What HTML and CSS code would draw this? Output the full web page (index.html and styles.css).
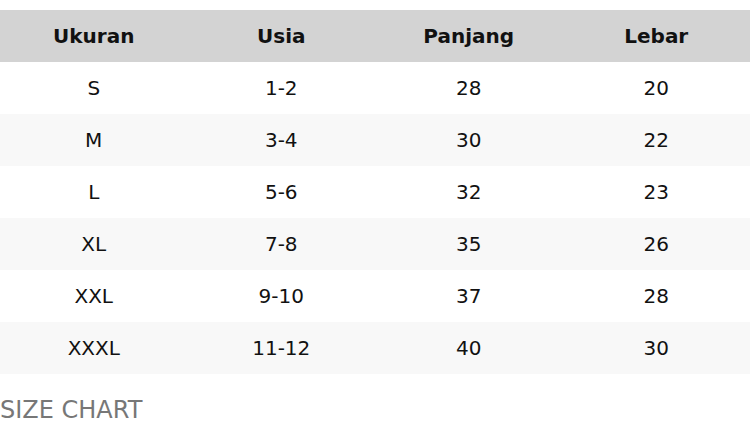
FILE: index.html
```html
<!DOCTYPE html>
<html>
<head>
<meta charset="utf-8">
<link rel="stylesheet" href="styles.css">
</head>
<body>
<table class="chart">
  <thead>
    <tr><th>Ukuran</th><th>Usia</th><th>Panjang</th><th>Lebar</th></tr>
  </thead>
  <tbody>
    <tr><td>S</td><td>1-2</td><td>28</td><td>20</td></tr>
    <tr><td>M</td><td>3-4</td><td>30</td><td>22</td></tr>
    <tr><td>L</td><td>5-6</td><td>32</td><td>23</td></tr>
    <tr><td>XL</td><td>7-8</td><td>35</td><td>26</td></tr>
    <tr><td>XXL</td><td>9-10</td><td>37</td><td>28</td></tr>
    <tr><td>XXXL</td><td>11-12</td><td>40</td><td>30</td></tr>
  </tbody>
</table>
<div class="caption">SIZE CHART</div>
</body>
</html>
```
FILE: styles.css
```css
html, body {
  margin: 0;
  padding: 0;
  background: #fff;
}
body {
  padding-top: 10px;
  font-family: "DejaVu Sans", sans-serif;
  color: #111;
}
.chart {
  width: 750px;
  border-collapse: collapse;
  table-layout: fixed;
}
.chart th, .chart td {
  height: 52px;
  padding: 0;
  text-align: center;
  font-size: 20px;
  box-sizing: border-box;
}
.chart th {
  background: #d3d3d3;
  font-weight: bold;
  color: #111;
}
.chart tbody tr:nth-child(even) td {
  background: #f8f8f8;
}
.caption {
  margin-top: 22px;
  font-size: 24px;
  color: #777;
  line-height: 28px;
}
```
